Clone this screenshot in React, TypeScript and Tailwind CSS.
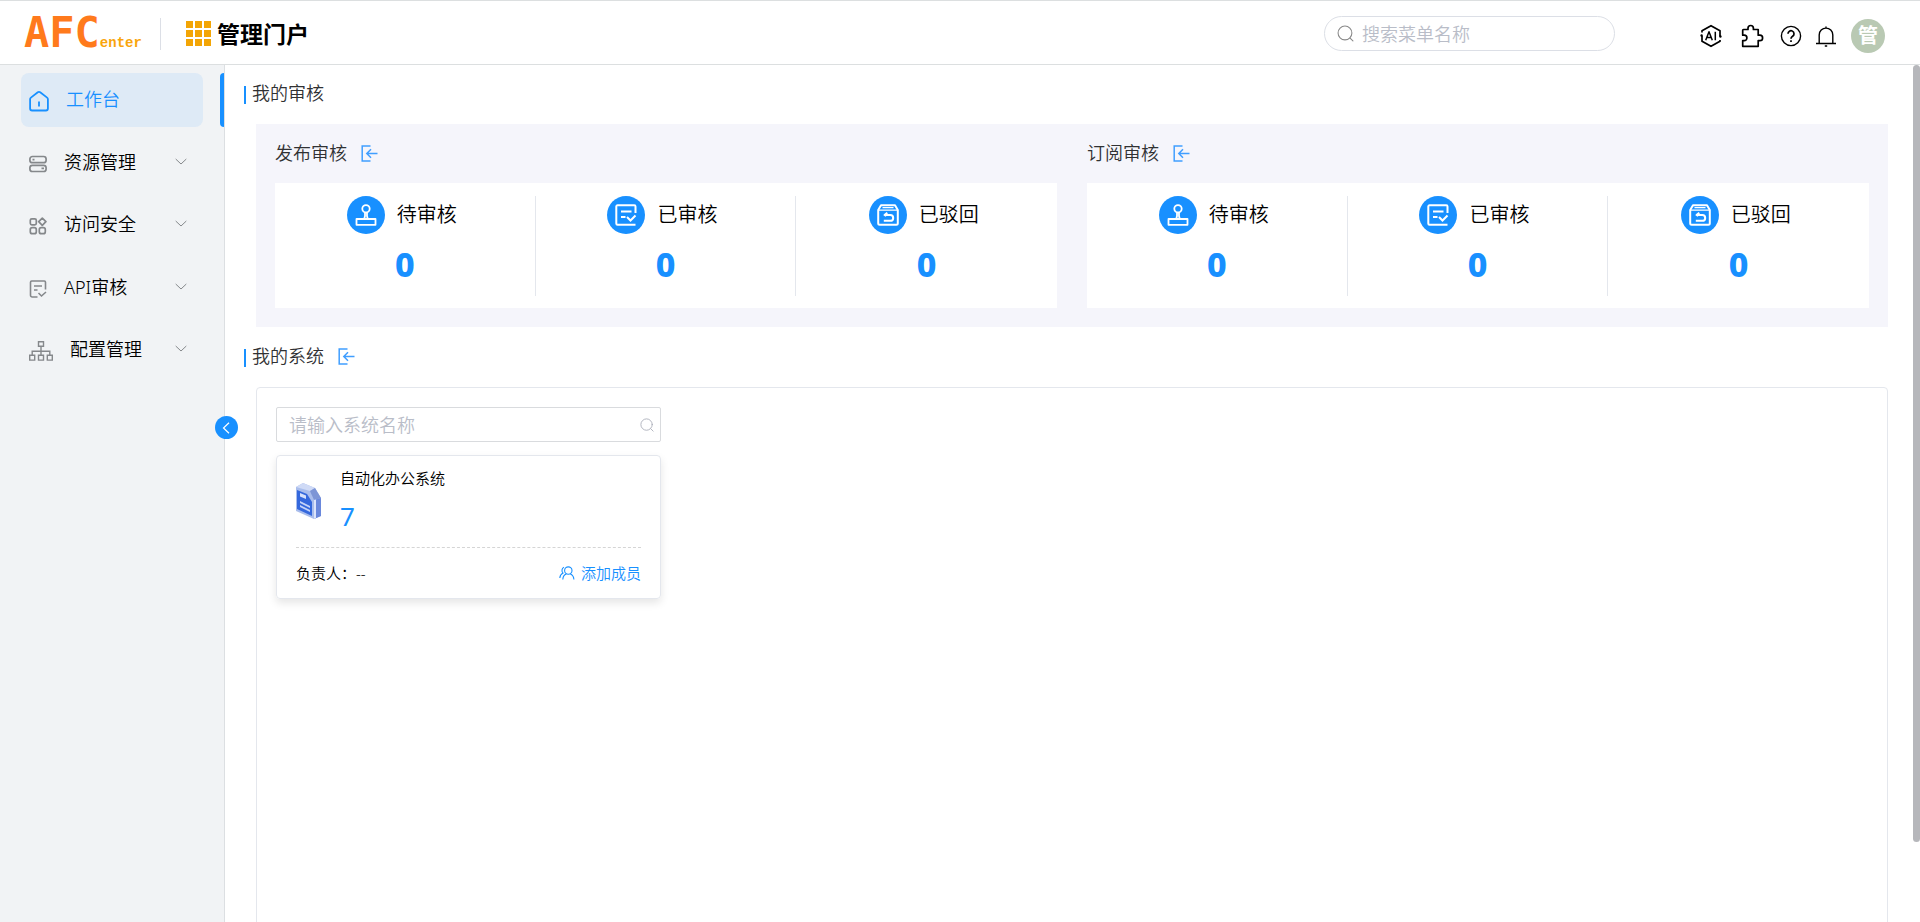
import type { ReactNode } from "react";

interface IconProps {
  className?: string;
}

function SearchIcon({ className }: IconProps) {
  return (
    <svg viewBox="0 0 16 16" className={className} fill="none" stroke="currentColor" strokeLinecap="round">
      <circle cx="7.5" cy="7.5" r="6.5" />
      <path d="M12.3 12.3 15 15" />
    </svg>
  );
}

function EnterIcon({ className }: IconProps) {
  return (
    <svg viewBox="0 0 17 17" className={className} fill="none" stroke="currentColor" strokeWidth="1.5">
      <path d="M9.5 1H1.2v15h8.3M16.5 8.5H5.8M10 4.2 5.8 8.5l4.2 4.3" />
    </svg>
  );
}

function ChevronDown({ className }: IconProps) {
  return (
    <svg viewBox="0 0 12 12" className={className} fill="none" stroke="currentColor">
      <path d="m.7 3 5.3 5 5.3-5" />
    </svg>
  );
}

function HomeIcon() {
  return (
    <svg viewBox="0 0 20 22" className="h-[22px] w-5" fill="none" stroke="currentColor" strokeWidth="1.8" strokeLinejoin="round">
      <path d="M8.8 2.3 1.9 7.6a2 2 0 0 0-.8 1.6v9.3a2 2 0 0 0 2 2h13.8a2 2 0 0 0 2-2V9.2a2 2 0 0 0-.8-1.6l-6.900-5.300a2 2 0 0 0-2.400 0Z" />
      <path d="M10 11.5v5" />
    </svg>
  );
}

function ServerIcon() {
  return (
    <svg viewBox="0 0 18 18" className="size-[18px]" fill="none" stroke="currentColor" strokeWidth="1.7">
      <rect x=".9" y="1.5" width="16.2" height="6.2" rx="2.5" />
      <rect x=".9" y="10.3" width="16.2" height="6.2" rx="2.5" />
      <path d="M3.5 4.6h2M12.5 13.4H15" />
    </svg>
  );
}

function AppsIcon() {
  return (
    <svg viewBox="0 0 18 18" className="size-[18px]" fill="none" stroke="currentColor" strokeWidth="1.7">
      <rect x="1.3" y="1.8" width="6" height="6" rx="1.5" />
      <rect x="1.3" y="10.7" width="6" height="6" rx="2" />
      <rect x="10.3" y="10.7" width="6" height="6" rx="2" />
      <path d="m13.3 1.1 3.6 3.6-3.6 3.600-3.600-3.600Z" strokeLinejoin="round" />
    </svg>
  );
}

function AuditIcon() {
  return (
    <svg viewBox="0 0 18 18" className="size-[18px]" fill="none" stroke="currentColor" strokeWidth="1.6">
      <path d="M16.5 9.5V2.2A1.2 1.2 0 0 0 15.3 1H2.7a1.2 1.2 0 0 0-1.2 1.2v13.1A1.7 1.7 0 0 0 3.200 17H8.500M5 6h8M5 10h3.500M9.500 13l3 3 4.500-4" />
    </svg>
  );
}

function TreeIcon() {
  return (
    <svg viewBox="0 0 24 20" className="h-5 w-6" fill="none" stroke="currentColor" strokeWidth="1.4">
      <path d="M9.5.7h5v4.6h-5zM.7 14.300h5v4.800h-5zM9.500 14.300h5v4.800h-5zM18.300 14.300h5v4.800h-5zM12 5.300v9M3.200 14v-3.800h17.600V14" />
    </svg>
  );
}

function StampIcon() {
  return (
    <svg viewBox="0 0 22 22" className="size-[22px]" fill="none" stroke="currentColor" strokeWidth="1.8" strokeLinejoin="round">
      <circle cx="11" cy="4.8" r="3.7" />
      <path d="M10 8.5V12l-.8 3M12 8.5V12l.8 3" />
      <path d="M1.5 15h19v5.8h-19z" />
    </svg>
  );
}

function CheckedIcon() {
  return (
    <svg viewBox="0 0 22 22" className="size-[22px]" fill="none" stroke="currentColor" strokeWidth="2">
      <path d="M20.5 9V2.5a1.2 1.2 0 0 0-1.2-1.2H2.5a1.2 1.2 0 0 0-1.2 1.2v17a1.2 1.2 0 0 0 1.2 1.2h18M6 7.5h10.500M6 13h4.500M12 13l3.500 3.500 5-5" />
    </svg>
  );
}

function RejectedIcon() {
  return (
    <svg viewBox="0 0 22 22" className="size-[22px]" fill="none" stroke="currentColor" strokeWidth="2" strokeLinejoin="round">
      <path d="M1.2 6 4 1.2h14L20.8 6v13.2a1.500 1.500 0 0 1-1.500 1.500H2.700a1.500 1.500 0 0 1-1.500-1.500Z" />
      <path d="M1.5 6.2h19M5.5 3.7h11" strokeWidth="1.3" />
      <path d="M7.500 11h5.800a2.900 2.900 0 0 1 0 5.800H6.800M10.300 8.800 7.500 11l1.800 1" />
    </svg>
  );
}

function MembersIcon() {
  return (
    <svg viewBox="0 0 16 14" className="h-3.5 w-4" fill="none" stroke="currentColor" strokeWidth="1.1">
      <circle cx="9.3" cy="4.6" r="3.7" />
      <path d="M3.800 13.500c.2-3.200 1.700-4.900 3.500-5.500M11.300 8c2 .7 3.400 2.400 3.600 5.500M5 1.300C2.700 2.300 2.300 5.400 4 7.100 1.900 8.200 1 9.800.8 12" />
    </svg>
  );
}

function AiIcon() {
  return (
    <svg viewBox="0 0 24 24" className="size-6" fill="none" stroke="currentColor" strokeWidth="1.7" strokeLinejoin="round">
      <path d="M3 8.500V6.800L12 1.700l9 5.100V12M21 16v1.200l-9 5.100-9-5.100V12" />
      <circle cx="2.6" cy="11.5" r="1.2" fill="currentColor" stroke="none" />
      <circle cx="21.4" cy="12.5" r="1.2" fill="currentColor" stroke="none" />
      <path d="m6.700 16.200 3.300-8.400 3.300 8.400M8 13.500h4M16.300 7.800v8.400" strokeWidth="1.5" />
    </svg>
  );
}

function PuzzleIcon() {
  return (
    <svg viewBox="0 0 24 24" className="size-6" fill="none" stroke="currentColor" strokeWidth="1.7" strokeLinejoin="round">
      <path d="M3.500 5.500H8V4.200a2.700 2.700 0 0 1 5.400 0v1.300h4.800v5.700h1.700a2.700 2.700 0 0 1 0 5.400h-1.700v5.700H2.700v-5.700h1.500a2.700 2.700 0 0 0 0-5.400H2.700V6.300a.8.8 0 0 1 .8-.8Z" />
    </svg>
  );
}

function HelpIcon() {
  return (
    <svg viewBox="0 0 22 22" className="size-[22px]" fill="none" stroke="currentColor" strokeWidth="1.4">
      <circle cx="11" cy="11" r="9.6" />
      <path d="M8 8.800a3 3 0 1 1 4.600 2.500c-1.100.7-1.600 1.200-1.600 2.500M11 15.300v1.700" strokeWidth="1.7" />
    </svg>
  );
}

function BellIcon() {
  return (
    <svg viewBox="0 0 20 22" className="h-[22px] w-5" fill="none" stroke="currentColor" strokeWidth="1.4">
      <path d="M0 18.500h20M3.200 18.500V9.900a6.800 6.800 0 0 1 13.600 0v8.600M10 1.500v2M8.800 21h2.400" />
    </svg>
  );
}

function SystemIcon() {
  return (
    <svg viewBox="0 0 26 36" className="h-9 w-[26px]">
      <path d="M0 4 7 0l12 5 6 10v18l-7 3L0 28Z" fill="#a9bdec" />
      <path d="m7 0 12 5-5 3L0 4Z" fill="#cfdaf6" />
      <path d="m19 5 6 10-7 2-4-9Z" fill="#7d95d6" />
      <path d="m18 17 7-2v18l-7 3Z" fill="#6a88dc" />
      <path d="m18 17 2-.6V35l-2 1Z" fill="#dbe4fb" />
      <path d="m1 7 10 4 5 8v14L1 26Z" fill="#3468dd" />
      <path d="m4 10 6 2.500v3.500L4 13.500Z" fill="#d5e0fb" />
      <path d="m4 18 10 5v2L4 20ZM4 22l10 5v2L4 24Z" fill="#c5d3f7" />
    </svg>
  );
}

const menu: { label: string; icon: ReactNode; active?: boolean }[] = [
  { label: "工作台", icon: <HomeIcon />, active: true },
  { label: "资源管理", icon: <ServerIcon /> },
  { label: "访问安全", icon: <AppsIcon /> },
  { label: "API审核", icon: <AuditIcon /> },
  { label: "配置管理", icon: <TreeIcon /> },
];

const stats = [
  { label: "待审核", value: 0, icon: <StampIcon /> },
  { label: "已审核", value: 0, icon: <CheckedIcon /> },
  { label: "已驳回", value: 0, icon: <RejectedIcon /> },
];

function Header() {
  return (
    <header className="flex h-[65px] shrink-0 items-center border-y border-[#dcdfe0] pt-0.5 pr-[35px] pl-6">
      <a href="#" className="flex w-[136px] items-baseline pb-0.5 whitespace-nowrap">
        <span className="font-['DejaVu_Sans_Mono',monospace] text-[42px] leading-[44px] font-bold text-[#ff7a1c]">AFC</span>
        <span className="font-['Liberation_Mono',monospace] text-sm font-bold text-[#f9a50c]">enter</span>
      </a>
      <div className="h-8 w-px bg-[#dcdfe6]" />
      <div className="ml-[25px] grid grid-cols-3 gap-0.5">
        {Array.from({ length: 9 }, (_, i) => (
          <span key={i} className="size-[7px] bg-[#f3a505]" />
        ))}
      </div>
      <h1 className="ml-1.5 text-[23px] leading-8 font-bold">管理门户</h1>

      <label className="ml-auto flex h-[35px] w-[291px] items-center rounded-full border border-[#dcdfe6] pl-3">
        <SearchIcon className="size-[17px] text-[#888]" />
        <input
          type="text"
          aria-label="搜索菜单名称"
          placeholder="搜索菜单名称"
          className="ml-2 min-w-0 flex-1 bg-transparent text-lg font-[350] outline-none placeholder:text-[#b9bdc8]"
        />
      </label>
      <div className="ml-[84px] flex items-center pt-1">
        <button type="button" aria-label="AI">
          <AiIcon />
        </button>
        <button type="button" aria-label="插件" className="ml-[17px]">
          <PuzzleIcon />
        </button>
        <button type="button" aria-label="帮助" className="ml-4">
          <HelpIcon />
        </button>
        <button type="button" aria-label="通知" className="ml-3.5">
          <BellIcon />
        </button>
        <button type="button" className="ml-[15px] size-[34px] rounded-full bg-[#b9c9b3] text-xl leading-8 font-bold text-white">
          管
        </button>
      </div>
    </header>
  );
}

function Sidebar() {
  return (
    <aside className="relative w-[225px] shrink-0 border-r border-[#dcdfe2] bg-[#f1f3f5] pt-2">
      <nav className="flex h-76 flex-col justify-between">
        {menu.map((item) => (
          <div key={item.label} className="flex h-[54px] items-center justify-between pl-[21px]">
            <a
              href="#"
              className={
                item.active
                  ? "flex h-full w-[182px] items-center rounded-lg bg-[#deeaf6] pr-4 pb-0.5 pl-2 text-[#1890ff]"
                  : "flex h-full w-[182px] items-center rounded-lg pr-4 pb-0.5 pl-2 text-black"
              }
            >
              <span className={item.active ? "pt-1" : "pt-1 text-[#85888b]"}>{item.icon}</span>
              <span className="ml-[17px] text-lg font-[350]">{item.label}</span>
              {!item.active && <ChevronDown className="ml-auto size-3 text-[#85888b]" />}
            </a>
            {item.active && <span className="h-full w-1 rounded-l bg-[#1890ff]" />}
          </div>
        ))}
      </nav>
      <button
        type="button"
        aria-label="收起菜单"
        className="absolute top-[351px] -right-3.5 z-10 flex size-[23px] items-center justify-center rounded-full bg-[#1890ff] text-white"
      >
        <svg viewBox="0 0 12 12" className="size-3" fill="none" stroke="currentColor" strokeWidth="1.2">
          <path d="M8 .7 2.500 6 8 11.300" />
        </svg>
      </button>
    </aside>
  );
}

function SectionTitle({ title, children }: { title: string; children?: ReactNode }) {
  return (
    <div className="flex h-7 items-center">
      <span className="mt-1 h-[18px] w-0.5 bg-[#1890ff]" />
      <h2 className="ml-1.5 text-lg font-[350] text-[#303133]">{title}</h2>
      {children}
    </div>
  );
}

function EnterButton({ label }: { label: string }) {
  return (
    <button type="button" aria-label={label} className="ml-3.5 text-[#409eff]">
      <EnterIcon className="size-[17px]" />
    </button>
  );
}

function AuditGroup({ title }: { title: string }) {
  return (
    <div className="flex-1">
      <div className="flex h-7 items-center">
        <h3 className="text-lg font-[350] text-[#303133]">{title}</h3>
        <EnterButton label={title} />
      </div>
      <div className="mt-4 grid grid-cols-3 divide-x divide-[#e4e7ed] bg-white pt-[13px] pb-3">
        {stats.map((stat) => (
          <div key={stat.label} className="flex h-[100px] flex-col items-center">
            <div className="flex items-center pr-1.5">
              <span className="flex size-[38px] items-center justify-center rounded-full bg-[#1890ff] text-white">{stat.icon}</span>
              <span className="ml-3 text-xl font-[350]">{stat.label}</span>
            </div>
            <span className="mt-2.5 text-[34px] leading-10 font-extrabold text-[#1890ff]">{stat.value}</span>
          </div>
        ))}
      </div>
    </div>
  );
}

function SystemCard() {
  return (
    <div className="mt-[13px] h-36 w-[385px] rounded border border-[#e4e7ed] px-[19px] shadow-[0_4px_8px_rgba(0,0,0,0.1)]">
      <div className="flex h-[92px] items-center border-b border-dashed border-[#d5d5d5] pb-0.5">
        <SystemIcon />
        <div className="ml-[18px] flex flex-col">
          <span className="text-[15px] leading-6 font-[350]">自动化办公系统</span>
          <span className="mt-1.5 text-[26px] leading-10 text-[#1890ff]">7</span>
        </div>
      </div>
      <div className="flex h-[50px] items-center justify-between text-[15px] font-[350]">
        <span>负责人：--</span>
        <button type="button" className="flex items-center gap-1.5 text-[#1890ff]">
          <MembersIcon />
          添加成员
        </button>
      </div>
    </div>
  );
}

export default function App() {
  return (
    <div className="flex h-screen flex-col overflow-hidden bg-white font-['Noto_Sans','Noto_Sans_CJK_SC',sans-serif] text-black">
      <Header />
      <div className="flex min-h-0 flex-1">
        <Sidebar />
        <main className="relative flex min-w-0 flex-1 flex-col overflow-hidden pt-3.5 pr-8 pl-[19px]">
          <SectionTitle title="我的审核" />
          <section className="mt-[17px] ml-3 flex gap-[30px] bg-[#f5f5fb] px-[19px] pt-[15px] pb-[19px]">
            <AuditGroup title="发布审核" />
            <AuditGroup title="订阅审核" />
          </section>
          <div className="mt-[15px]">
            <SectionTitle title="我的系统">
              <EnterButton label="我的系统" />
            </SectionTitle>
          </div>
          <section className="mt-[17px] -mb-2 ml-3 flex-1 rounded border border-[#e4e7ed] px-[19px] pt-[19px]">
            <label className="flex h-[35px] w-[385px] items-center rounded-xs border border-[#d9dbde] pr-1.5 pl-3">
              <input
                type="text"
                aria-label="请输入系统名称"
                placeholder="请输入系统名称"
                className="min-w-0 flex-1 bg-transparent text-lg font-[350] outline-none placeholder:text-[#b9bdc8]"
              />
              <SearchIcon className="size-3.5 text-[#a9adb8]" />
            </label>
            <SystemCard />
          </section>
          <div className="absolute top-0 right-0 h-[777px] w-[7px] rounded-full bg-[#b6b7bb]" />
        </main>
      </div>
    </div>
  );
}
